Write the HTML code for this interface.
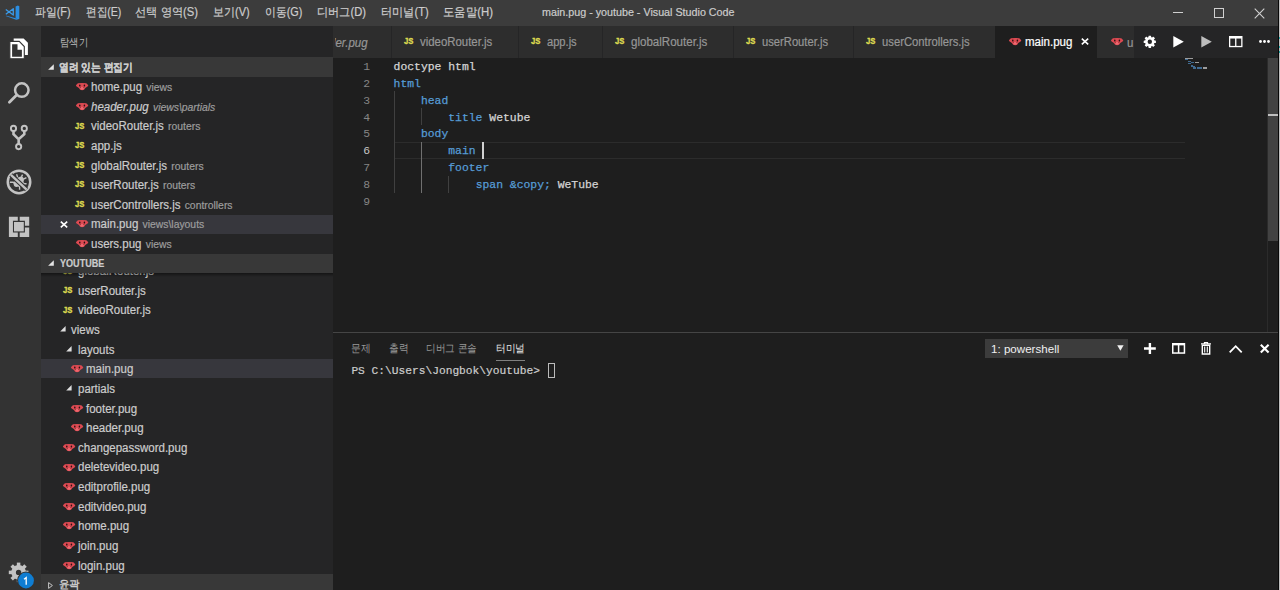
<!DOCTYPE html>
<html><head><meta charset="utf-8"><title>VS Code</title>
<style>
*{margin:0;padding:0;box-sizing:border-box}
html,body{width:1280px;height:590px;overflow:hidden;background:#1e1e1e;font-family:"Liberation Sans",sans-serif}
.a{position:absolute;white-space:pre}
svg.a{overflow:visible}
</style></head><body>
<div class="a" style="left:0px;top:0px;width:1280px;height:26px;background:#3c3c3c;"></div>
<div class="a" style="left:0px;top:26px;width:41px;height:564px;background:#333333;"></div>
<div class="a" style="left:41px;top:26px;width:292px;height:564px;background:#252526;"></div>
<div class="a" style="left:333px;top:26px;width:947px;height:31.5px;background:#252526;"></div>
<div class="a" style="left:333px;top:57.5px;width:945px;height:532.5px;background:#1e1e1e;"></div>
<svg class="a" style="left:0px;top:0px;" width="24" height="24" viewBox="0 0 24 24"><path d="M15.6 6.5 L17.9 5.5 L19.3 6.2 V18.7 L17.9 19.6 L15.6 18.3 Z" fill="#2b8de0"/><path d="M5.6 16.1 L6.6 15.7 L15.8 18.2 L17.9 19.6 L16.2 19.7 Z" fill="#2b8de0"/><path d="M5.8 9.4 L13.3 15 V8.7 L5.8 14.2" fill="none" stroke="#3a9ae8" stroke-width="1.3" stroke-linejoin="round"/></svg>
<div class="a" style="left:35px;top:3.34px;font:normal normal 12px/19.2px 'Liberation Sans',sans-serif;color:#cccccc;-webkit-text-stroke:0.2px currentColor;transform:scaleX(0.9052);transform-origin:0 0">파일(F)</div>
<div class="a" style="left:85.6px;top:3.34px;font:normal normal 12px/19.2px 'Liberation Sans',sans-serif;color:#cccccc;-webkit-text-stroke:0.2px currentColor;transform:scaleX(0.8850);transform-origin:0 0">편집(E)</div>
<div class="a" style="left:135px;top:3.34px;font:normal normal 12px/19.2px 'Liberation Sans',sans-serif;color:#cccccc;-webkit-text-stroke:0.2px currentColor;transform:scaleX(0.9355);transform-origin:0 0">선택 영역(S)</div>
<div class="a" style="left:213px;top:3.34px;font:normal normal 12px/19.2px 'Liberation Sans',sans-serif;color:#cccccc;-webkit-text-stroke:0.2px currentColor;transform:scaleX(0.9175);transform-origin:0 0">보기(V)</div>
<div class="a" style="left:264.6px;top:3.34px;font:normal normal 12px/19.2px 'Liberation Sans',sans-serif;color:#cccccc;-webkit-text-stroke:0.2px currentColor;transform:scaleX(0.9050);transform-origin:0 0">이동(G)</div>
<div class="a" style="left:317px;top:3.34px;font:normal normal 12px/19.2px 'Liberation Sans',sans-serif;color:#cccccc;-webkit-text-stroke:0.2px currentColor;transform:scaleX(0.9303);transform-origin:0 0">디버그(D)</div>
<div class="a" style="left:381px;top:3.34px;font:normal normal 12px/19.2px 'Liberation Sans',sans-serif;color:#cccccc;-webkit-text-stroke:0.2px currentColor;transform:scaleX(0.9293);transform-origin:0 0">터미널(T)</div>
<div class="a" style="left:443px;top:3.34px;font:normal normal 12px/19.2px 'Liberation Sans',sans-serif;color:#cccccc;-webkit-text-stroke:0.2px currentColor;transform:scaleX(0.9493);transform-origin:0 0">도움말(H)</div>
<div class="a" style="left:542.2px;top:4.46px;font:normal normal 11.2px/17.92px 'Liberation Sans',sans-serif;color:#cccccc;-webkit-text-stroke:0.2px currentColor;transform:scaleX(0.9593);transform-origin:0 0">main.pug - youtube - Visual Studio Code</div>
<div class="a" style="left:1173px;top:12px;width:9.5px;height:1px;background:#d0d0d0;"></div>
<div class="a" style="left:1214px;top:8px;width:9.5px;height:9.5px;background:transparent;border:1px solid #d0d0d0"></div>
<svg class="a" style="left:1254px;top:7.5px;" width="11" height="11" viewBox="0 0 11 11"><path d="M0.7 0.7 L10.3 10.3 M10.3 0.7 L0.7 10.3" stroke="#d0d0d0" stroke-width="1.1"/></svg>
<div class="a" style="left:59.7px;top:33.44px;font:normal normal 11.3px/18.08px 'Liberation Sans',sans-serif;color:#bbbbbb;;transform:scaleX(0.8485);transform-origin:0 0">탐색기</div>
<div class="a" style="left:41px;top:57.4px;width:292px;height:19.6px;background:#383838;"></div>
<svg class="a" style="left:47.8px;top:63.5px;" width="6" height="6" viewBox="0 0 6 6"><path d="M5.8 0.2 V5.8 H0.1 Z" fill="#e4e4e4"/></svg>
<div class="a" style="left:59px;top:58.96px;font:normal bold 11.2px/17.92px 'Liberation Sans',sans-serif;color:#cccccc;-webkit-text-stroke:0.2px currentColor;transform:scaleX(0.8868);transform-origin:0 0">열려 있는 편집기</div>
<svg class="a" style="left:75.6px;top:83.39999999999999px;" width="13" height="7.5" viewBox="0 0 13 7.5"><path d="M1.9 0.2 Q6.1 -0.2 10.3 0.2 L12.3 2.3 Q12.2 3.3 10.8 3.9 L9.3 5 Q8.4 7.3 6.1 7.3 Q3.8 7.3 2.9 5 L1.4 3.9 Q0 3.3 -0.1 2.3 Z" fill="#dc4a52"/><ellipse cx="6.1" cy="5.4" rx="1.7" ry="1.3" fill="#ee6870"/><circle cx="3.8" cy="2.4" r="0.8" fill="#2a1012"/><circle cx="8.4" cy="2.4" r="0.8" fill="#2a1012"/><path d="M3.6 3 L4.5 4.7 M8.6 3 L7.7 4.7" stroke="#5a1c22" stroke-width="0.7"/></svg>
<div class="a" style="left:90.8px;top:78.30px;font:normal normal 12.3px/19.68px 'Liberation Sans',sans-serif;color:#cccccc;-webkit-text-stroke:0.2px currentColor;transform:scaleX(0.935);transform-origin:0 0">home.pug<span style="font-size:11.1px;color:#9d9d9d;margin-left:4.5px">views</span></div>
<svg class="a" style="left:75.6px;top:102.96px;" width="13" height="7.5" viewBox="0 0 13 7.5"><path d="M1.9 0.2 Q6.1 -0.2 10.3 0.2 L12.3 2.3 Q12.2 3.3 10.8 3.9 L9.3 5 Q8.4 7.3 6.1 7.3 Q3.8 7.3 2.9 5 L1.4 3.9 Q0 3.3 -0.1 2.3 Z" fill="#dc4a52"/><ellipse cx="6.1" cy="5.4" rx="1.7" ry="1.3" fill="#ee6870"/><circle cx="3.8" cy="2.4" r="0.8" fill="#2a1012"/><circle cx="8.4" cy="2.4" r="0.8" fill="#2a1012"/><path d="M3.6 3 L4.5 4.7 M8.6 3 L7.7 4.7" stroke="#5a1c22" stroke-width="0.7"/></svg>
<div class="a" style="left:90.8px;top:97.86px;font:italic normal 12.3px/19.68px 'Liberation Sans',sans-serif;color:#cccccc;-webkit-text-stroke:0.2px currentColor;transform:scaleX(0.935);transform-origin:0 0">header.pug<span style="font-size:11.1px;color:#9d9d9d;margin-left:4.5px">views\partials</span></div>
<div class="a" style="left:75.39999999999999px;top:117.77px;font:normal bold 9.9px/15.84px 'Liberation Sans',sans-serif;color:#dcd850;-webkit-text-stroke:0.4px #dcd850;transform:scaleX(0.7773);transform-origin:0 0">JS</div>
<div class="a" style="left:90.8px;top:117.42px;font:normal normal 12.3px/19.68px 'Liberation Sans',sans-serif;color:#cccccc;-webkit-text-stroke:0.2px currentColor;transform:scaleX(0.935);transform-origin:0 0">videoRouter.js<span style="font-size:11.1px;color:#9d9d9d;margin-left:4.5px">routers</span></div>
<div class="a" style="left:75.39999999999999px;top:137.33px;font:normal bold 9.9px/15.84px 'Liberation Sans',sans-serif;color:#dcd850;-webkit-text-stroke:0.4px #dcd850;transform:scaleX(0.7773);transform-origin:0 0">JS</div>
<div class="a" style="left:90.8px;top:136.98px;font:normal normal 12.3px/19.68px 'Liberation Sans',sans-serif;color:#cccccc;-webkit-text-stroke:0.2px currentColor;transform:scaleX(0.935);transform-origin:0 0">app.js</div>
<div class="a" style="left:75.39999999999999px;top:156.89px;font:normal bold 9.9px/15.84px 'Liberation Sans',sans-serif;color:#dcd850;-webkit-text-stroke:0.4px #dcd850;transform:scaleX(0.7773);transform-origin:0 0">JS</div>
<div class="a" style="left:90.8px;top:156.54px;font:normal normal 12.3px/19.68px 'Liberation Sans',sans-serif;color:#cccccc;-webkit-text-stroke:0.2px currentColor;transform:scaleX(0.935);transform-origin:0 0">globalRouter.js<span style="font-size:11.1px;color:#9d9d9d;margin-left:4.5px">routers</span></div>
<div class="a" style="left:75.39999999999999px;top:176.45px;font:normal bold 9.9px/15.84px 'Liberation Sans',sans-serif;color:#dcd850;-webkit-text-stroke:0.4px #dcd850;transform:scaleX(0.7773);transform-origin:0 0">JS</div>
<div class="a" style="left:90.8px;top:176.10px;font:normal normal 12.3px/19.68px 'Liberation Sans',sans-serif;color:#cccccc;-webkit-text-stroke:0.2px currentColor;transform:scaleX(0.935);transform-origin:0 0">userRouter.js<span style="font-size:11.1px;color:#9d9d9d;margin-left:4.5px">routers</span></div>
<div class="a" style="left:75.39999999999999px;top:196.01px;font:normal bold 9.9px/15.84px 'Liberation Sans',sans-serif;color:#dcd850;-webkit-text-stroke:0.4px #dcd850;transform:scaleX(0.7773);transform-origin:0 0">JS</div>
<div class="a" style="left:90.8px;top:195.66px;font:normal normal 12.3px/19.68px 'Liberation Sans',sans-serif;color:#cccccc;-webkit-text-stroke:0.2px currentColor;transform:scaleX(0.935);transform-origin:0 0">userControllers.js<span style="font-size:11.1px;color:#9d9d9d;margin-left:4.5px">controllers</span></div>
<div class="a" style="left:41px;top:214.51999999999998px;width:292px;height:19.56px;background:#37373d;"></div>
<svg class="a" style="left:60.3px;top:221.11999999999998px;" width="8" height="7" viewBox="0 0 8 7"><path d="M0.8 0.6 L7.2 6.4 M7.2 0.6 L0.8 6.4" stroke="#ffffff" stroke-width="1.6"/></svg>
<svg class="a" style="left:75.6px;top:220.32px;" width="13" height="7.5" viewBox="0 0 13 7.5"><path d="M1.9 0.2 Q6.1 -0.2 10.3 0.2 L12.3 2.3 Q12.2 3.3 10.8 3.9 L9.3 5 Q8.4 7.3 6.1 7.3 Q3.8 7.3 2.9 5 L1.4 3.9 Q0 3.3 -0.1 2.3 Z" fill="#dc4a52"/><ellipse cx="6.1" cy="5.4" rx="1.7" ry="1.3" fill="#ee6870"/><circle cx="3.8" cy="2.4" r="0.8" fill="#2a1012"/><circle cx="8.4" cy="2.4" r="0.8" fill="#2a1012"/><path d="M3.6 3 L4.5 4.7 M8.6 3 L7.7 4.7" stroke="#5a1c22" stroke-width="0.7"/></svg>
<div class="a" style="left:90.8px;top:215.22px;font:normal normal 12.3px/19.68px 'Liberation Sans',sans-serif;color:#cccccc;-webkit-text-stroke:0.2px currentColor;transform:scaleX(0.935);transform-origin:0 0">main.pug<span style="font-size:11.1px;color:#9d9d9d;margin-left:4.5px">views\layouts</span></div>
<svg class="a" style="left:75.6px;top:239.88px;" width="13" height="7.5" viewBox="0 0 13 7.5"><path d="M1.9 0.2 Q6.1 -0.2 10.3 0.2 L12.3 2.3 Q12.2 3.3 10.8 3.9 L9.3 5 Q8.4 7.3 6.1 7.3 Q3.8 7.3 2.9 5 L1.4 3.9 Q0 3.3 -0.1 2.3 Z" fill="#dc4a52"/><ellipse cx="6.1" cy="5.4" rx="1.7" ry="1.3" fill="#ee6870"/><circle cx="3.8" cy="2.4" r="0.8" fill="#2a1012"/><circle cx="8.4" cy="2.4" r="0.8" fill="#2a1012"/><path d="M3.6 3 L4.5 4.7 M8.6 3 L7.7 4.7" stroke="#5a1c22" stroke-width="0.7"/></svg>
<div class="a" style="left:90.8px;top:234.78px;font:normal normal 12.3px/19.68px 'Liberation Sans',sans-serif;color:#cccccc;-webkit-text-stroke:0.2px currentColor;transform:scaleX(0.935);transform-origin:0 0">users.pug<span style="font-size:11.1px;color:#9d9d9d;margin-left:4.5px">views</span></div>
<div class="a" style="left:62.8px;top:262.55px;font:normal bold 9.9px/15.84px 'Liberation Sans',sans-serif;color:#dcd850;-webkit-text-stroke:0.4px #dcd850;transform:scaleX(0.7773);transform-origin:0 0">JS</div>
<div class="a" style="left:78px;top:262.20px;font:normal normal 12.3px/19.68px 'Liberation Sans',sans-serif;color:#cccccc;-webkit-text-stroke:0.2px currentColor;transform:scaleX(0.935);transform-origin:0 0">globalRouter.js</div>
<div class="a" style="left:62.8px;top:282.17px;font:normal bold 9.9px/15.84px 'Liberation Sans',sans-serif;color:#dcd850;-webkit-text-stroke:0.4px #dcd850;transform:scaleX(0.7773);transform-origin:0 0">JS</div>
<div class="a" style="left:78px;top:281.82px;font:normal normal 12.3px/19.68px 'Liberation Sans',sans-serif;color:#cccccc;-webkit-text-stroke:0.2px currentColor;transform:scaleX(0.935);transform-origin:0 0">userRouter.js</div>
<div class="a" style="left:62.8px;top:301.79px;font:normal bold 9.9px/15.84px 'Liberation Sans',sans-serif;color:#dcd850;-webkit-text-stroke:0.4px #dcd850;transform:scaleX(0.7773);transform-origin:0 0">JS</div>
<div class="a" style="left:78px;top:301.44px;font:normal normal 12.3px/19.68px 'Liberation Sans',sans-serif;color:#cccccc;-webkit-text-stroke:0.2px currentColor;transform:scaleX(0.935);transform-origin:0 0">videoRouter.js</div>
<svg class="a" style="left:59.5px;top:326.36px;" width="6" height="6" viewBox="0 0 6 6"><path d="M5.6 0 V5.4 H0.2 Z" fill="#dedede"/></svg>
<div class="a" style="left:70.9px;top:321.06px;font:normal normal 12.3px/19.68px 'Liberation Sans',sans-serif;color:#cccccc;-webkit-text-stroke:0.2px currentColor;transform:scaleX(0.935);transform-origin:0 0">views</div>
<svg class="a" style="left:66.3px;top:345.98px;" width="6" height="6" viewBox="0 0 6 6"><path d="M5.6 0 V5.4 H0.2 Z" fill="#dedede"/></svg>
<div class="a" style="left:78.4px;top:340.68px;font:normal normal 12.3px/19.68px 'Liberation Sans',sans-serif;color:#cccccc;-webkit-text-stroke:0.2px currentColor;transform:scaleX(0.935);transform-origin:0 0">layouts</div>
<div class="a" style="left:41px;top:358.70000000000005px;width:292px;height:19.62px;background:#37373d;"></div>
<svg class="a" style="left:71px;top:365.40000000000003px;" width="13" height="7.5" viewBox="0 0 13 7.5"><path d="M1.9 0.2 Q6.1 -0.2 10.3 0.2 L12.3 2.3 Q12.2 3.3 10.8 3.9 L9.3 5 Q8.4 7.3 6.1 7.3 Q3.8 7.3 2.9 5 L1.4 3.9 Q0 3.3 -0.1 2.3 Z" fill="#dc4a52"/><ellipse cx="6.1" cy="5.4" rx="1.7" ry="1.3" fill="#ee6870"/><circle cx="3.8" cy="2.4" r="0.8" fill="#2a1012"/><circle cx="8.4" cy="2.4" r="0.8" fill="#2a1012"/><path d="M3.6 3 L4.5 4.7 M8.6 3 L7.7 4.7" stroke="#5a1c22" stroke-width="0.7"/></svg>
<div class="a" style="left:85.8px;top:360.30px;font:normal normal 12.3px/19.68px 'Liberation Sans',sans-serif;color:#cccccc;-webkit-text-stroke:0.2px currentColor;transform:scaleX(0.935);transform-origin:0 0">main.pug</div>
<svg class="a" style="left:66.3px;top:385.22px;" width="6" height="6" viewBox="0 0 6 6"><path d="M5.6 0 V5.4 H0.2 Z" fill="#dedede"/></svg>
<div class="a" style="left:78.4px;top:379.92px;font:normal normal 12.3px/19.68px 'Liberation Sans',sans-serif;color:#cccccc;-webkit-text-stroke:0.2px currentColor;transform:scaleX(0.935);transform-origin:0 0">partials</div>
<svg class="a" style="left:71px;top:404.64000000000004px;" width="13" height="7.5" viewBox="0 0 13 7.5"><path d="M1.9 0.2 Q6.1 -0.2 10.3 0.2 L12.3 2.3 Q12.2 3.3 10.8 3.9 L9.3 5 Q8.4 7.3 6.1 7.3 Q3.8 7.3 2.9 5 L1.4 3.9 Q0 3.3 -0.1 2.3 Z" fill="#dc4a52"/><ellipse cx="6.1" cy="5.4" rx="1.7" ry="1.3" fill="#ee6870"/><circle cx="3.8" cy="2.4" r="0.8" fill="#2a1012"/><circle cx="8.4" cy="2.4" r="0.8" fill="#2a1012"/><path d="M3.6 3 L4.5 4.7 M8.6 3 L7.7 4.7" stroke="#5a1c22" stroke-width="0.7"/></svg>
<div class="a" style="left:85.8px;top:399.54px;font:normal normal 12.3px/19.68px 'Liberation Sans',sans-serif;color:#cccccc;-webkit-text-stroke:0.2px currentColor;transform:scaleX(0.935);transform-origin:0 0">footer.pug</div>
<svg class="a" style="left:71px;top:424.26000000000005px;" width="13" height="7.5" viewBox="0 0 13 7.5"><path d="M1.9 0.2 Q6.1 -0.2 10.3 0.2 L12.3 2.3 Q12.2 3.3 10.8 3.9 L9.3 5 Q8.4 7.3 6.1 7.3 Q3.8 7.3 2.9 5 L1.4 3.9 Q0 3.3 -0.1 2.3 Z" fill="#dc4a52"/><ellipse cx="6.1" cy="5.4" rx="1.7" ry="1.3" fill="#ee6870"/><circle cx="3.8" cy="2.4" r="0.8" fill="#2a1012"/><circle cx="8.4" cy="2.4" r="0.8" fill="#2a1012"/><path d="M3.6 3 L4.5 4.7 M8.6 3 L7.7 4.7" stroke="#5a1c22" stroke-width="0.7"/></svg>
<div class="a" style="left:85.8px;top:419.16px;font:normal normal 12.3px/19.68px 'Liberation Sans',sans-serif;color:#cccccc;-webkit-text-stroke:0.2px currentColor;transform:scaleX(0.935);transform-origin:0 0">header.pug</div>
<svg class="a" style="left:63px;top:443.88000000000005px;" width="13" height="7.5" viewBox="0 0 13 7.5"><path d="M1.9 0.2 Q6.1 -0.2 10.3 0.2 L12.3 2.3 Q12.2 3.3 10.8 3.9 L9.3 5 Q8.4 7.3 6.1 7.3 Q3.8 7.3 2.9 5 L1.4 3.9 Q0 3.3 -0.1 2.3 Z" fill="#dc4a52"/><ellipse cx="6.1" cy="5.4" rx="1.7" ry="1.3" fill="#ee6870"/><circle cx="3.8" cy="2.4" r="0.8" fill="#2a1012"/><circle cx="8.4" cy="2.4" r="0.8" fill="#2a1012"/><path d="M3.6 3 L4.5 4.7 M8.6 3 L7.7 4.7" stroke="#5a1c22" stroke-width="0.7"/></svg>
<div class="a" style="left:78px;top:438.78px;font:normal normal 12.3px/19.68px 'Liberation Sans',sans-serif;color:#cccccc;-webkit-text-stroke:0.2px currentColor;transform:scaleX(0.935);transform-origin:0 0">changepassword.pug</div>
<svg class="a" style="left:63px;top:463.50000000000006px;" width="13" height="7.5" viewBox="0 0 13 7.5"><path d="M1.9 0.2 Q6.1 -0.2 10.3 0.2 L12.3 2.3 Q12.2 3.3 10.8 3.9 L9.3 5 Q8.4 7.3 6.1 7.3 Q3.8 7.3 2.9 5 L1.4 3.9 Q0 3.3 -0.1 2.3 Z" fill="#dc4a52"/><ellipse cx="6.1" cy="5.4" rx="1.7" ry="1.3" fill="#ee6870"/><circle cx="3.8" cy="2.4" r="0.8" fill="#2a1012"/><circle cx="8.4" cy="2.4" r="0.8" fill="#2a1012"/><path d="M3.6 3 L4.5 4.7 M8.6 3 L7.7 4.7" stroke="#5a1c22" stroke-width="0.7"/></svg>
<div class="a" style="left:78px;top:458.40px;font:normal normal 12.3px/19.68px 'Liberation Sans',sans-serif;color:#cccccc;-webkit-text-stroke:0.2px currentColor;transform:scaleX(0.935);transform-origin:0 0">deletevideo.pug</div>
<svg class="a" style="left:63px;top:483.12000000000006px;" width="13" height="7.5" viewBox="0 0 13 7.5"><path d="M1.9 0.2 Q6.1 -0.2 10.3 0.2 L12.3 2.3 Q12.2 3.3 10.8 3.9 L9.3 5 Q8.4 7.3 6.1 7.3 Q3.8 7.3 2.9 5 L1.4 3.9 Q0 3.3 -0.1 2.3 Z" fill="#dc4a52"/><ellipse cx="6.1" cy="5.4" rx="1.7" ry="1.3" fill="#ee6870"/><circle cx="3.8" cy="2.4" r="0.8" fill="#2a1012"/><circle cx="8.4" cy="2.4" r="0.8" fill="#2a1012"/><path d="M3.6 3 L4.5 4.7 M8.6 3 L7.7 4.7" stroke="#5a1c22" stroke-width="0.7"/></svg>
<div class="a" style="left:78px;top:478.02px;font:normal normal 12.3px/19.68px 'Liberation Sans',sans-serif;color:#cccccc;-webkit-text-stroke:0.2px currentColor;transform:scaleX(0.935);transform-origin:0 0">editprofile.pug</div>
<svg class="a" style="left:63px;top:502.74px;" width="13" height="7.5" viewBox="0 0 13 7.5"><path d="M1.9 0.2 Q6.1 -0.2 10.3 0.2 L12.3 2.3 Q12.2 3.3 10.8 3.9 L9.3 5 Q8.4 7.3 6.1 7.3 Q3.8 7.3 2.9 5 L1.4 3.9 Q0 3.3 -0.1 2.3 Z" fill="#dc4a52"/><ellipse cx="6.1" cy="5.4" rx="1.7" ry="1.3" fill="#ee6870"/><circle cx="3.8" cy="2.4" r="0.8" fill="#2a1012"/><circle cx="8.4" cy="2.4" r="0.8" fill="#2a1012"/><path d="M3.6 3 L4.5 4.7 M8.6 3 L7.7 4.7" stroke="#5a1c22" stroke-width="0.7"/></svg>
<div class="a" style="left:78px;top:497.64px;font:normal normal 12.3px/19.68px 'Liberation Sans',sans-serif;color:#cccccc;-webkit-text-stroke:0.2px currentColor;transform:scaleX(0.935);transform-origin:0 0">editvideo.pug</div>
<svg class="a" style="left:63px;top:522.3599999999999px;" width="13" height="7.5" viewBox="0 0 13 7.5"><path d="M1.9 0.2 Q6.1 -0.2 10.3 0.2 L12.3 2.3 Q12.2 3.3 10.8 3.9 L9.3 5 Q8.4 7.3 6.1 7.3 Q3.8 7.3 2.9 5 L1.4 3.9 Q0 3.3 -0.1 2.3 Z" fill="#dc4a52"/><ellipse cx="6.1" cy="5.4" rx="1.7" ry="1.3" fill="#ee6870"/><circle cx="3.8" cy="2.4" r="0.8" fill="#2a1012"/><circle cx="8.4" cy="2.4" r="0.8" fill="#2a1012"/><path d="M3.6 3 L4.5 4.7 M8.6 3 L7.7 4.7" stroke="#5a1c22" stroke-width="0.7"/></svg>
<div class="a" style="left:78px;top:517.26px;font:normal normal 12.3px/19.68px 'Liberation Sans',sans-serif;color:#cccccc;-webkit-text-stroke:0.2px currentColor;transform:scaleX(0.935);transform-origin:0 0">home.pug</div>
<svg class="a" style="left:63px;top:541.98px;" width="13" height="7.5" viewBox="0 0 13 7.5"><path d="M1.9 0.2 Q6.1 -0.2 10.3 0.2 L12.3 2.3 Q12.2 3.3 10.8 3.9 L9.3 5 Q8.4 7.3 6.1 7.3 Q3.8 7.3 2.9 5 L1.4 3.9 Q0 3.3 -0.1 2.3 Z" fill="#dc4a52"/><ellipse cx="6.1" cy="5.4" rx="1.7" ry="1.3" fill="#ee6870"/><circle cx="3.8" cy="2.4" r="0.8" fill="#2a1012"/><circle cx="8.4" cy="2.4" r="0.8" fill="#2a1012"/><path d="M3.6 3 L4.5 4.7 M8.6 3 L7.7 4.7" stroke="#5a1c22" stroke-width="0.7"/></svg>
<div class="a" style="left:78px;top:536.88px;font:normal normal 12.3px/19.68px 'Liberation Sans',sans-serif;color:#cccccc;-webkit-text-stroke:0.2px currentColor;transform:scaleX(0.935);transform-origin:0 0">join.pug</div>
<svg class="a" style="left:63px;top:561.5999999999999px;" width="13" height="7.5" viewBox="0 0 13 7.5"><path d="M1.9 0.2 Q6.1 -0.2 10.3 0.2 L12.3 2.3 Q12.2 3.3 10.8 3.9 L9.3 5 Q8.4 7.3 6.1 7.3 Q3.8 7.3 2.9 5 L1.4 3.9 Q0 3.3 -0.1 2.3 Z" fill="#dc4a52"/><ellipse cx="6.1" cy="5.4" rx="1.7" ry="1.3" fill="#ee6870"/><circle cx="3.8" cy="2.4" r="0.8" fill="#2a1012"/><circle cx="8.4" cy="2.4" r="0.8" fill="#2a1012"/><path d="M3.6 3 L4.5 4.7 M8.6 3 L7.7 4.7" stroke="#5a1c22" stroke-width="0.7"/></svg>
<div class="a" style="left:78px;top:556.50px;font:normal normal 12.3px/19.68px 'Liberation Sans',sans-serif;color:#cccccc;-webkit-text-stroke:0.2px currentColor;transform:scaleX(0.935);transform-origin:0 0">login.pug</div>
<div class="a" style="left:41px;top:253.6px;width:292px;height:19.56px;background:#383838;"></div>
<div class="a" style="left:41px;top:273.15999999999997px;width:292px;height:4px;background:linear-gradient(rgba(0,0,0,0.45),rgba(0,0,0,0));"></div>
<svg class="a" style="left:47.8px;top:259.8px;" width="6" height="6" viewBox="0 0 6 6"><path d="M5.8 0.2 V5.8 H0.1 Z" fill="#e4e4e4"/></svg>
<div class="a" style="left:59.5px;top:255.61px;font:normal bold 10.2px/16.32px 'Liberation Sans',sans-serif;color:#cccccc;-webkit-text-stroke:0.2px currentColor;transform:scaleX(0.8893);transform-origin:0 0">YOUTUBE</div>
<div class="a" style="left:41px;top:574.2px;width:292px;height:16px;background:#383838;"></div>
<svg class="a" style="left:48px;top:581.5px;" width="5" height="7" viewBox="0 0 5 7"><path d="M0.6 0.6 L4.4 3.5 L0.6 6.4 Z" fill="none" stroke="#c5c5c5" stroke-width="1"/></svg>
<div class="a" style="left:58.8px;top:575.99px;font:normal bold 11px/17.6px 'Liberation Sans',sans-serif;color:#cccccc;;transform:scaleX(0.9545);transform-origin:0 0">윤곽</div>
<svg class="a" style="left:0px;top:0px;" width="41" height="590" viewBox="0 0 41 590"><path d="M13.7 38.4 H23.6 L27.9 42.7 V55.1 H13.7 Z" fill="#ffffff"/><path d="M9.85 41.4 H19.25 L24.3 46.5 V58.7 H9.85 Z" fill="#ffffff" stroke="#333333" stroke-width="1.1"/><path d="M12.1 44.2 H17.5 V49.8 H21.9 V56.7 H12.1 Z" fill="#333333"/><circle cx="21.8" cy="90.1" r="6.75" fill="none" stroke="#c3c3c3" stroke-width="2.5"/><path d="M9.4 102.3 L16.4 95.3" stroke="#c3c3c3" stroke-width="2.8" stroke-linecap="round"/><circle cx="13.5" cy="128.4" r="2.6" fill="none" stroke="#c3c3c3" stroke-width="1.9"/><circle cx="24.3" cy="128.4" r="2.6" fill="none" stroke="#c3c3c3" stroke-width="1.9"/><circle cx="18.65" cy="146.6" r="2.6" fill="none" stroke="#c3c3c3" stroke-width="1.9"/><path d="M13.5 131 V134.2 L18.65 139.3 L24.3 134.2 V131 M18.65 139 V144" fill="none" stroke="#c3c3c3" stroke-width="2.6"/><circle cx="19" cy="181.9" r="11.25" fill="none" stroke="#c3c3c3" stroke-width="2.5"/><ellipse cx="18.8" cy="181.8" rx="6.2" ry="3.9" transform="rotate(-45 18.8 181.8)" fill="#c3c3c3"/><path d="M9.8 182.2 H13.2 L14.8 183.8 M16.6 174.3 L17.6 177.2 M26.4 177.6 L23.4 179.2 M26.6 183.8 H24.2 L22.6 182.4 M19.6 189.8 V186.6 L18 185.2 M22.6 174.6 L21.4 176.8" fill="none" stroke="#c3c3c3" stroke-width="1.4"/><path d="M10.9 174.9 L26.6 189.6" stroke="#333333" stroke-width="4.6"/><path d="M10.9 174.9 L26.6 189.6" stroke="#c3c3c3" stroke-width="2.4"/><path d="M8.9 216.8 H17.8 V220.85 H12.95 V232.5 H17.8 V236.9 H8.9 Z" fill="#c3c3c3"/><path d="M19.7 216.8 H29.2 V225.7 H24.9 V220.85 H19.7 Z" fill="#c3c3c3"/><path d="M19.7 236.9 H29.2 V227.6 H24.9 V232.5 H19.7 Z" fill="#c3c3c3"/><rect x="14" y="222" width="9.8" height="9.4" fill="#c3c3c3"/><g transform="translate(18.6 572.4)"><circle r="5" fill="none" stroke="#c3c3c3" stroke-width="4.6"/><rect x="-1.75" y="-9.8" width="3.5" height="4.5" fill="#c3c3c3" transform="rotate(0)"/><rect x="-1.75" y="-9.8" width="3.5" height="4.5" fill="#c3c3c3" transform="rotate(45)"/><rect x="-1.75" y="-9.8" width="3.5" height="4.5" fill="#c3c3c3" transform="rotate(90)"/><rect x="-1.75" y="-9.8" width="3.5" height="4.5" fill="#c3c3c3" transform="rotate(135)"/><rect x="-1.75" y="-9.8" width="3.5" height="4.5" fill="#c3c3c3" transform="rotate(180)"/><rect x="-1.75" y="-9.8" width="3.5" height="4.5" fill="#c3c3c3" transform="rotate(225)"/><rect x="-1.75" y="-9.8" width="3.5" height="4.5" fill="#c3c3c3" transform="rotate(270)"/><rect x="-1.75" y="-9.8" width="3.5" height="4.5" fill="#c3c3c3" transform="rotate(315)"/></g><circle cx="26" cy="580.5" r="9" fill="#333333"/><circle cx="26" cy="580.5" r="7.9" fill="#0f7dd2"/><path d="M24 579.2 L26.2 577.6 V584.8" fill="none" stroke="#ffffff" stroke-width="1.3"/></svg>
<div class="a" style="left:333px;top:26px;width:57.5px;height:31.5px;background:#2d2d2d;"></div>
<div class="a" style="left:391.5px;top:26px;width:126.0px;height:31.5px;background:#2d2d2d;"></div>
<div class="a" style="left:403.8px;top:33.25px;font:normal bold 9.9px/15.84px 'Liberation Sans',sans-serif;color:#dcd850;-webkit-text-stroke:0.4px #dcd850;transform:scaleX(0.7773);transform-origin:0 0">JS</div>
<div class="a" style="left:419.8px;top:32.50px;font:normal normal 12.3px/19.68px 'Liberation Sans',sans-serif;color:#969696;-webkit-text-stroke:0.2px currentColor;transform:scaleX(0.9277);transform-origin:0 0">videoRouter.js</div>
<div class="a" style="left:518.5px;top:26px;width:83.0px;height:31.5px;background:#2d2d2d;"></div>
<div class="a" style="left:530.8px;top:33.25px;font:normal bold 9.9px/15.84px 'Liberation Sans',sans-serif;color:#dcd850;-webkit-text-stroke:0.4px #dcd850;transform:scaleX(0.7773);transform-origin:0 0">JS</div>
<div class="a" style="left:546.8px;top:32.50px;font:normal normal 12.3px/19.68px 'Liberation Sans',sans-serif;color:#969696;-webkit-text-stroke:0.2px currentColor;transform:scaleX(0.9047);transform-origin:0 0">app.js</div>
<div class="a" style="left:602.5px;top:26px;width:130.0px;height:31.5px;background:#2d2d2d;"></div>
<div class="a" style="left:614.8px;top:33.25px;font:normal bold 9.9px/15.84px 'Liberation Sans',sans-serif;color:#dcd850;-webkit-text-stroke:0.4px #dcd850;transform:scaleX(0.7773);transform-origin:0 0">JS</div>
<div class="a" style="left:630.8px;top:32.50px;font:normal normal 12.3px/19.68px 'Liberation Sans',sans-serif;color:#969696;-webkit-text-stroke:0.2px currentColor;transform:scaleX(0.9390);transform-origin:0 0">globalRouter.js</div>
<div class="a" style="left:733.5px;top:26px;width:119.0px;height:31.5px;background:#2d2d2d;"></div>
<div class="a" style="left:745.8px;top:33.25px;font:normal bold 9.9px/15.84px 'Liberation Sans',sans-serif;color:#dcd850;-webkit-text-stroke:0.4px #dcd850;transform:scaleX(0.7773);transform-origin:0 0">JS</div>
<div class="a" style="left:761.8px;top:32.50px;font:normal normal 12.3px/19.68px 'Liberation Sans',sans-serif;color:#969696;-webkit-text-stroke:0.2px currentColor;transform:scaleX(0.9109);transform-origin:0 0">userRouter.js</div>
<div class="a" style="left:853.5px;top:26px;width:141.5px;height:31.5px;background:#2d2d2d;"></div>
<div class="a" style="left:865.8px;top:33.25px;font:normal bold 9.9px/15.84px 'Liberation Sans',sans-serif;color:#dcd850;-webkit-text-stroke:0.4px #dcd850;transform:scaleX(0.7773);transform-origin:0 0">JS</div>
<div class="a" style="left:881.8px;top:32.50px;font:normal normal 12.3px/19.68px 'Liberation Sans',sans-serif;color:#969696;-webkit-text-stroke:0.2px currentColor;transform:scaleX(0.9155);transform-origin:0 0">userControllers.js</div>
<div class="a" style="left:995px;top:26px;width:102px;height:31.5px;background:#1e1e1e;"></div>
<div class="a" style="left:333px;top:26px;width:57px;height:31.5px;overflow:hidden"><div class="a" style="left:-4.2px;top:9.9px;font:italic normal 12.3px/14px 'Liberation Sans',sans-serif;color:#969696;transform:scaleX(0.935);transform-origin:0 0;-webkit-text-stroke:0.2px #969696">der.pug</div></div>
<div class="a" style="left:333px;top:26px;width:2px;height:31px;background:#2d2d2d;"></div>
<svg class="a" style="left:1008.6px;top:38px;" width="13" height="7.5" viewBox="0 0 13 7.5"><path d="M1.9 0.2 Q6.1 -0.2 10.3 0.2 L12.3 2.3 Q12.2 3.3 10.8 3.9 L9.3 5 Q8.4 7.3 6.1 7.3 Q3.8 7.3 2.9 5 L1.4 3.9 Q0 3.3 -0.1 2.3 Z" fill="#dc4a52"/><ellipse cx="6.1" cy="5.4" rx="1.7" ry="1.3" fill="#ee6870"/><circle cx="3.8" cy="2.4" r="0.8" fill="#2a1012"/><circle cx="8.4" cy="2.4" r="0.8" fill="#2a1012"/><path d="M3.6 3 L4.5 4.7 M8.6 3 L7.7 4.7" stroke="#5a1c22" stroke-width="0.7"/></svg>
<div class="a" style="left:1024.6px;top:32.50px;font:normal normal 12.3px/19.68px 'Liberation Sans',sans-serif;color:#ffffff;-webkit-text-stroke:0.2px currentColor;transform:scaleX(0.9369);transform-origin:0 0">main.pug</div>
<svg class="a" style="left:1081.2px;top:38.3px;" width="8" height="7" viewBox="0 0 8 7"><path d="M0.8 0.6 L7.2 6.4 M7.2 0.6 L0.8 6.4" stroke="#ffffff" stroke-width="1.6"/></svg>
<div class="a" style="left:1097px;top:26px;width:37px;height:31.5px;background:#2d2d2d;"></div>
<svg class="a" style="left:1111px;top:38px;" width="13" height="7.5" viewBox="0 0 13 7.5"><path d="M1.9 0.2 Q6.1 -0.2 10.3 0.2 L12.3 2.3 Q12.2 3.3 10.8 3.9 L9.3 5 Q8.4 7.3 6.1 7.3 Q3.8 7.3 2.9 5 L1.4 3.9 Q0 3.3 -0.1 2.3 Z" fill="#dc4a52"/><ellipse cx="6.1" cy="5.4" rx="1.7" ry="1.3" fill="#ee6870"/><circle cx="3.8" cy="2.4" r="0.8" fill="#2a1012"/><circle cx="8.4" cy="2.4" r="0.8" fill="#2a1012"/><path d="M3.6 3 L4.5 4.7 M8.6 3 L7.7 4.7" stroke="#5a1c22" stroke-width="0.7"/></svg>
<div class="a" style="left:1097px;top:26px;width:37px;height:31.5px;overflow:hidden"><div class="a" style="left:29.6px;top:9.6px;font:normal normal 12.3px/14px 'Liberation Sans',sans-serif;color:#969696;transform:scaleX(0.935);transform-origin:0 0;-webkit-text-stroke:0.2px #969696">u:</div></div>
<svg class="a" style="left:1143px;top:35px;" width="14" height="14" viewBox="0 0 14 14"><g transform="translate(6.8 6.8)"><circle r="3.5" fill="none" stroke="#ffffff" stroke-width="2.6"/><rect x="-1.3" y="-6.1" width="2.6" height="2.4" rx="0.4" fill="#ffffff" transform="rotate(0)"/><rect x="-1.3" y="-6.1" width="2.6" height="2.4" rx="0.4" fill="#ffffff" transform="rotate(45)"/><rect x="-1.3" y="-6.1" width="2.6" height="2.4" rx="0.4" fill="#ffffff" transform="rotate(90)"/><rect x="-1.3" y="-6.1" width="2.6" height="2.4" rx="0.4" fill="#ffffff" transform="rotate(135)"/><rect x="-1.3" y="-6.1" width="2.6" height="2.4" rx="0.4" fill="#ffffff" transform="rotate(180)"/><rect x="-1.3" y="-6.1" width="2.6" height="2.4" rx="0.4" fill="#ffffff" transform="rotate(225)"/><rect x="-1.3" y="-6.1" width="2.6" height="2.4" rx="0.4" fill="#ffffff" transform="rotate(270)"/><rect x="-1.3" y="-6.1" width="2.6" height="2.4" rx="0.4" fill="#ffffff" transform="rotate(315)"/></g></svg>
<svg class="a" style="left:1173px;top:36px;" width="11" height="12" viewBox="0 0 11 12"><path d="M0.3 0 L10.8 5.8 L0.3 11.6 Z" fill="#ffffff"/></svg>
<svg class="a" style="left:1201.3px;top:36px;" width="11" height="12" viewBox="0 0 11 12"><path d="M0.3 0 L10.8 5.8 L0.3 11.6 Z" fill="#bdbdbd"/></svg>
<svg class="a" style="left:1228.8px;top:35.8px;" width="13.5" height="11.2" viewBox="0 0 13.5 11.2"><rect x="0.65" y="0.65" width="12.2" height="9.9" fill="none" stroke="#ffffff" stroke-width="1.3"/><rect x="0.65" y="0.65" width="12.2" height="1.9" fill="#ffffff"/><path d="M6.75 1 V10.5" stroke="#ffffff" stroke-width="1.3"/></svg>
<svg class="a" style="left:1258.7px;top:39.5px;" width="3" height="3" viewBox="0 0 3 3"><circle cx="1.5" cy="1.5" r="1.4" fill="#ffffff"/></svg>
<svg class="a" style="left:1262.7px;top:39.5px;" width="3" height="3" viewBox="0 0 3 3"><circle cx="1.5" cy="1.5" r="1.4" fill="#ffffff"/></svg>
<svg class="a" style="left:1266.8px;top:39.5px;" width="3" height="3" viewBox="0 0 3 3"><circle cx="1.5" cy="1.5" r="1.4" fill="#ffffff"/></svg>
<div class="a" style="left:394px;top:141.5px;width:791px;height:17.89px;background:transparent;border-top:1px solid #2c2c2c;border-bottom:1px solid #2c2c2c"></div>
<div class="a" style="left:393.6px;top:91.33px;width:1px;height:101.34px;background:#404040;"></div>
<div class="a" style="left:420.96000000000004px;top:108.22px;width:1px;height:16.89px;background:#404040;"></div>
<div class="a" style="left:420.96000000000004px;top:142.0px;width:1px;height:50.67px;background:#707070;"></div>
<div class="a" style="left:448.32000000000005px;top:175.78px;width:1px;height:16.89px;background:#404040;"></div>
<div class="a" style="left:363.26px;top:57.90px;font:normal normal 11.4px/18.24px 'Liberation Mono',monospace;color:#858585;">1</div>
<div class="a" style="left:393.6px;top:57.90px;font:normal normal 11.4px/18.24px 'Liberation Mono',monospace;color:#d4d4d4;-webkit-text-stroke:0.25px currentColor"><span style="color:#d4d4d4">doctype html</span></div>
<div class="a" style="left:363.26px;top:74.79px;font:normal normal 11.4px/18.24px 'Liberation Mono',monospace;color:#858585;">2</div>
<div class="a" style="left:393.6px;top:74.79px;font:normal normal 11.4px/18.24px 'Liberation Mono',monospace;color:#d4d4d4;-webkit-text-stroke:0.25px currentColor"><span style="color:#569cd6">html</span></div>
<div class="a" style="left:363.26px;top:91.68px;font:normal normal 11.4px/18.24px 'Liberation Mono',monospace;color:#858585;">3</div>
<div class="a" style="left:393.6px;top:91.68px;font:normal normal 11.4px/18.24px 'Liberation Mono',monospace;color:#d4d4d4;-webkit-text-stroke:0.25px currentColor">    <span style="color:#569cd6">head</span></div>
<div class="a" style="left:363.26px;top:108.57px;font:normal normal 11.4px/18.24px 'Liberation Mono',monospace;color:#858585;">4</div>
<div class="a" style="left:393.6px;top:108.57px;font:normal normal 11.4px/18.24px 'Liberation Mono',monospace;color:#d4d4d4;-webkit-text-stroke:0.25px currentColor">        <span style="color:#569cd6">title</span><span style="color:#d4d4d4"> Wetube</span></div>
<div class="a" style="left:363.26px;top:125.46px;font:normal normal 11.4px/18.24px 'Liberation Mono',monospace;color:#858585;">5</div>
<div class="a" style="left:393.6px;top:125.46px;font:normal normal 11.4px/18.24px 'Liberation Mono',monospace;color:#d4d4d4;-webkit-text-stroke:0.25px currentColor">    <span style="color:#569cd6">body</span></div>
<div class="a" style="left:363.26px;top:142.35px;font:normal normal 11.4px/18.24px 'Liberation Mono',monospace;color:#c6c6c6;">6</div>
<div class="a" style="left:393.6px;top:142.35px;font:normal normal 11.4px/18.24px 'Liberation Mono',monospace;color:#d4d4d4;-webkit-text-stroke:0.25px currentColor">        <span style="color:#569cd6">main</span> </div>
<div class="a" style="left:363.26px;top:159.24px;font:normal normal 11.4px/18.24px 'Liberation Mono',monospace;color:#858585;">7</div>
<div class="a" style="left:393.6px;top:159.24px;font:normal normal 11.4px/18.24px 'Liberation Mono',monospace;color:#d4d4d4;-webkit-text-stroke:0.25px currentColor">        <span style="color:#569cd6">footer</span></div>
<div class="a" style="left:363.26px;top:176.13px;font:normal normal 11.4px/18.24px 'Liberation Mono',monospace;color:#858585;">8</div>
<div class="a" style="left:393.6px;top:176.13px;font:normal normal 11.4px/18.24px 'Liberation Mono',monospace;color:#d4d4d4;-webkit-text-stroke:0.25px currentColor">            <span style="color:#569cd6">span</span><span style="color:#569cd6"> &amp;copy;</span><span style="color:#d4d4d4"> WeTube</span></div>
<div class="a" style="left:363.26px;top:193.02px;font:normal normal 11.4px/18.24px 'Liberation Mono',monospace;color:#858585;">9</div>
<div class="a" style="left:482px;top:142px;width:2.1px;height:16.8px;background:#d0d0d0;"></div>
<div class="a" style="left:1185.0px;top:57.8px;width:8.399999999999999px;height:1.15px;background:#bdbdbd;opacity:0.8"></div>
<div class="a" style="left:1185.0px;top:59.18px;width:2.8px;height:1.15px;background:#4a7fb0;opacity:0.8"></div>
<div class="a" style="left:1187.8px;top:60.559999999999995px;width:2.8px;height:1.15px;background:#4a7fb0;opacity:0.8"></div>
<div class="a" style="left:1190.6px;top:61.94px;width:3.5px;height:1.15px;background:#4a7fb0;opacity:0.8"></div>
<div class="a" style="left:1194.8px;top:61.94px;width:4.199999999999999px;height:1.15px;background:#bdbdbd;opacity:0.8"></div>
<div class="a" style="left:1187.8px;top:63.31999999999999px;width:2.8px;height:1.15px;background:#4a7fb0;opacity:0.8"></div>
<div class="a" style="left:1190.6px;top:64.7px;width:2.8px;height:1.15px;background:#4a7fb0;opacity:0.8"></div>
<div class="a" style="left:1190.6px;top:66.08px;width:4.199999999999999px;height:1.15px;background:#4a7fb0;opacity:0.8"></div>
<div class="a" style="left:1193.4px;top:67.46px;width:2.8px;height:1.15px;background:#4a7fb0;opacity:0.8"></div>
<div class="a" style="left:1196.9px;top:67.46px;width:4.8999999999999995px;height:1.15px;background:#4a7fb0;opacity:0.8"></div>
<div class="a" style="left:1202.5px;top:67.46px;width:4.199999999999999px;height:1.15px;background:#bdbdbd;opacity:0.8"></div>
<div class="a" style="left:1267px;top:57.55px;width:11px;height:274.45px;background:#1e1e1e;border-left:1px solid #2b2b2b"></div>
<div class="a" style="left:1267.6px;top:57.55px;width:10.4px;height:183px;background:rgba(121,121,121,0.4);"></div>
<div class="a" style="left:1268px;top:113.5px;width:10px;height:2px;background:#c0c0c0;"></div>
<div class="a" style="left:333px;top:332px;width:945px;height:1px;background:#454545;"></div>
<div class="a" style="left:351px;top:339.76px;font:normal normal 11.2px/17.92px 'Liberation Sans',sans-serif;color:#999999;;transform:scaleX(0.8864);transform-origin:0 0">문제</div>
<div class="a" style="left:388.5px;top:339.76px;font:normal normal 11.2px/17.92px 'Liberation Sans',sans-serif;color:#999999;;transform:scaleX(0.8864);transform-origin:0 0">출력</div>
<div class="a" style="left:426.4px;top:339.76px;font:normal normal 11.2px/17.92px 'Liberation Sans',sans-serif;color:#999999;;transform:scaleX(0.8794);transform-origin:0 0">디버그 콘솔</div>
<div class="a" style="left:495.8px;top:339.76px;font:normal normal 11.2px/17.92px 'Liberation Sans',sans-serif;color:#e7e7e7;;transform:scaleX(0.8818);transform-origin:0 0">터미널</div>
<div class="a" style="left:495.8px;top:360px;width:29.2px;height:1px;background:#808080;"></div>
<div class="a" style="left:985px;top:338.8px;width:143px;height:19px;background:#3c3c3c;"></div>
<div class="a" style="left:990.5px;top:339.92px;font:normal normal 11.5px/18.4px 'Liberation Sans',sans-serif;color:#f0f0f0;;transform:scaleX(1.0079);transform-origin:0 0">1: powershell</div>
<svg class="a" style="left:1116.5px;top:344.8px;" width="7" height="6" viewBox="0 0 7 6"><path d="M0.2 0.3 H6.6 L3.4 5.8 Z" fill="#f0f0f0"/></svg>
<svg class="a" style="left:1143.8px;top:343px;" width="12" height="11" viewBox="0 0 12 11"><path d="M5.9 0 V11 M0 5.5 H11.8" stroke="#ffffff" stroke-width="2.4"/></svg>
<svg class="a" style="left:1172px;top:343.2px;" width="13.2" height="10.8" viewBox="0 0 13.2 10.8"><rect x="0.75" y="0.75" width="11.7" height="9.3" fill="none" stroke="#ffffff" stroke-width="1.5"/><rect x="0.75" y="0.75" width="11.7" height="1.6" fill="#ffffff"/><path d="M6.6 1 V10" stroke="#ffffff" stroke-width="1.5"/></svg>
<svg class="a" style="left:1201.3px;top:342px;" width="10" height="12.6" viewBox="0 0 10 12.6"><path d="M0 1.8 H10 M3.5 1.8 V0.5 H6.5 V1.8" stroke="#ffffff" stroke-width="1.2" fill="none"/><path d="M1.3 3.2 H8.7 V12 H1.3 Z" fill="none" stroke="#ffffff" stroke-width="1.4"/><path d="M3.7 4.5 V10.5 M6.3 4.5 V10.5" stroke="#ffffff" stroke-width="1.1"/></svg>
<svg class="a" style="left:1228.8px;top:344.5px;" width="13.4" height="8" viewBox="0 0 13.4 8"><path d="M0.7 7.4 L6.7 1.2 L12.7 7.4" fill="none" stroke="#ffffff" stroke-width="1.8"/></svg>
<svg class="a" style="left:1259.5px;top:343.8px;" width="9.4" height="9.3" viewBox="0 0 9.4 9.3"><path d="M0.8 0.8 L8.6 8.5 M8.6 0.8 L0.8 8.5" stroke="#ffffff" stroke-width="2.1"/></svg>
<div class="a" style="left:351.4px;top:363.33px;font:normal normal 11.23px/17.97px 'Liberation Mono',monospace;color:#cccccc;-webkit-text-stroke:0.2px currentColor">PS C:\Users\Jongbok\youtube&gt;</div>
<div class="a" style="left:547.5px;top:363px;width:7px;height:15.2px;background:transparent;border:1px solid #bbbbbb"></div>
<div class="a" style="left:1278px;top:0px;width:1px;height:590px;background:#080808;"></div>
<div class="a" style="left:1279px;top:0px;width:1px;height:590px;background:#bdbdbd;"></div>
<div class="a" style="left:1279px;top:37.2px;width:1px;height:1.3999999999999986px;background:#20a0a0;"></div>
<div class="a" style="left:1279px;top:45.8px;width:1px;height:1.8000000000000043px;background:#20a0a0;"></div>
<div class="a" style="left:1279px;top:50.6px;width:1px;height:2.6000000000000014px;background:#20a0a0;"></div>
</body></html>
